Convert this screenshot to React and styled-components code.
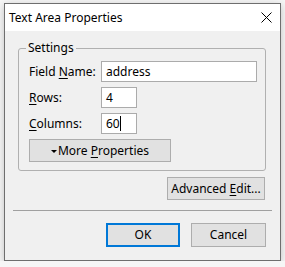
import React from "react";
import styled, { createGlobalStyle } from "styled-components";

const Global = createGlobalStyle`
  html, body { margin: 0; padding: 0; background: #f6f6f6; }
  body { font-family: "Noto Sans", "Segoe UI", sans-serif; font-size: 12px; color: #000; }
  * { box-sizing: border-box; }
`;

const Window = styled.div`
  margin: 3px 0 0 4px;
  width: 277px;
  height: 258px;
  border: 1px solid #6e6e6e;
  box-shadow: 0 2px 8px rgba(0, 0, 0, 0.22);
  display: flex;
  flex-direction: column;
  background: #f0f0f0;
`;

const TitleBar = styled.div`
  height: 27px;
  background: #fff;
  display: flex;
  align-items: center;
  justify-content: space-between;
  padding: 0 8px 0 4px;
  flex: none;
`;

const Title = styled.span`
  font-size: 12px;
  line-height: 16px;
`;

const CloseIcon = styled.svg`
  width: 11px;
  height: 11px;
  display: block;
`;

const Body = styled.div`
  flex: 1;
  display: flex;
  flex-direction: column;
  padding: 17px 0 0 0;
`;

const Group = styled.div`
  position: relative;
  margin: 0 14px 0 13px;
  height: 123px;
  border: 1px solid #b0b0b0;
  border-radius: 3px;
  padding: 12px 0 0 10px;
`;

const Legend = styled.span`
  position: absolute;
  top: -9px;
  left: 7px;
  padding: 0 2px;
  background: #f0f0f0;
  line-height: 16px;
`;

const Grid = styled.div`
  display: grid;
  grid-template-columns: 72px auto;
  row-gap: 5px;
  align-items: center;
`;

const Label = styled.span`
  line-height: 16px;
`;

const Key = styled.u`
  text-decoration: underline;
  text-underline-offset: 2px;
`;

const Field = styled.div`
  height: 21px;
  width: ${(p) => p.$w}px;
  border: 1px solid #ababab;
  background: #fff;
  padding: 0 4px;
  display: flex;
  align-items: center;
  line-height: 16px;
`;

const Caret = styled.span`
  display: inline-block;
  width: 1px;
  height: 15px;
  background: #000;
`;

const Button = styled.div`
  width: ${(p) => p.$w}px;
  height: ${(p) => p.$h || 23}px;
  background: #e1e1e1;
  border: ${(p) => (p.$default ? "2px solid #0078d7" : "1px solid #adadad")};
  display: flex;
  align-items: center;
  justify-content: center;
  line-height: 16px;
  flex: none;
`;

const ButtonText = styled.span`
  white-space: pre;
`;

const MoreButton = styled(Button)`
  margin-top: 5px;
`;

const Tri = styled.span`
  display: inline-block;
  width: 0;
  height: 0;
  border-left: 3px solid transparent;
  border-right: 3px solid transparent;
  border-top: 3px solid #000;
  margin-right: 1px;
  position: relative;
  top: -2px;
`;

const AdvRow = styled.div`
  display: flex;
  justify-content: flex-end;
  margin: 6px 15px 0 0;
`;

const Separator = styled.div`
  margin: 10px 8px 0 8px;
  height: 1px;
  background: #a0a0a0;
`;

const Footer = styled.div`
  display: flex;
  justify-content: flex-end;
  gap: 11px;
  margin: 12px 14px 0 0;
`;

export default function App() {
  return (
    <>
      <Global />
      <Window>
        <TitleBar>
          <Title>Text Area Properties</Title>
          <CloseIcon viewBox="0 0 11 11">
            <path d="M0.5 0.5 L10.5 10.5 M10.5 0.5 L0.5 10.5" stroke="#000" strokeWidth="1" fill="none" />
          </CloseIcon>
        </TitleBar>
        <Body>
          <Group>
            <Legend>Settings</Legend>
            <Grid>
              <Label>
                Field <Key>N</Key>ame:
              </Label>
              <Field $w={156}>address</Field>
              <Label>
                <Key>R</Key>ows:
              </Label>
              <Field $w={36}>4</Field>
              <Label>
                <Key>C</Key>olumns:
              </Label>
              <Field $w={36}>
                60
                <Caret />
              </Field>
            </Grid>
            <MoreButton $w={142}>
              <ButtonText>
                <Tri />
                More <Key>P</Key>roperties
              </ButtonText>
            </MoreButton>
          </Group>
          <AdvRow>
            <Button $w={98}>
              <ButtonText>
                Advanced <Key>E</Key>dit...
              </ButtonText>
            </Button>
          </AdvRow>
          <Separator />
          <Footer>
            <Button $w={74} $h={24} $default>
              <ButtonText>OK</ButtonText>
            </Button>
            <Button $w={75} $h={24}>
              <ButtonText>Cancel</ButtonText>
            </Button>
          </Footer>
        </Body>
      </Window>
    </>
  );
}
